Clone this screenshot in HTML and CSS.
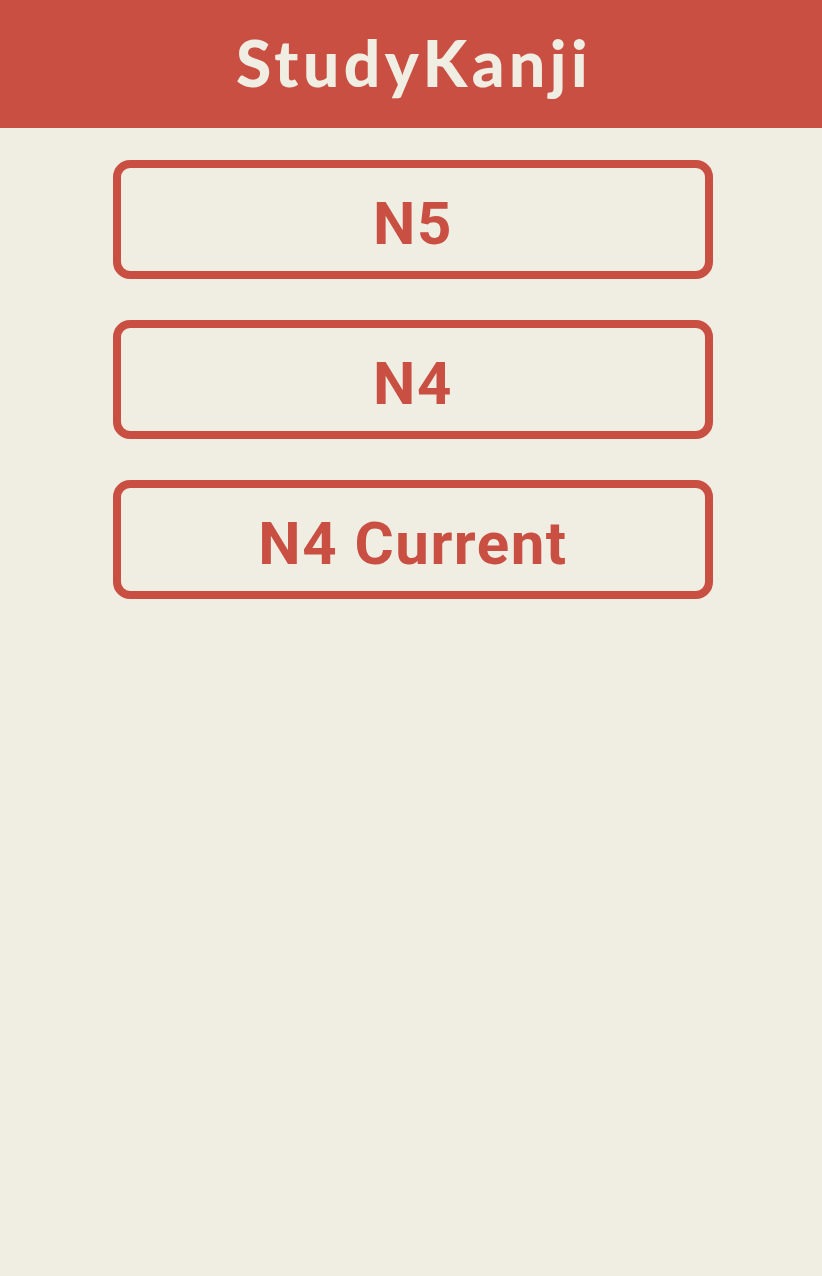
FILE: index.html
```html
<!DOCTYPE html>
<html>
<head>
<meta charset="utf-8">
<link rel="stylesheet" href="styles.css">
</head>
<body>
<header class="topbar"><h1 class="title">StudyKanji</h1></header>
<main class="menu">
  <a class="level" href="#">N5</a>
  <a class="level" href="#">N4</a>
  <a class="level" href="#">N4 Current</a>
</main>
</body>
</html>
```
FILE: styles.css
```css
html, body { margin: 0; padding: 0; }
body { background: #f0ede3; min-height: 1276px; }
.topbar {
  background: #c94f43;
  height: 128px;
  display: flex;
  align-items: center;
  justify-content: center;
}
.title {
  margin: 0;
  color: #f0ede3;
  font-family: "Lato", "DejaVu Sans", sans-serif;
  font-weight: 900;
  font-size: 64px;
  letter-spacing: 4.5px;
  line-height: 1;
  padding-bottom: 2px;
  padding-left: 6px;
}
.menu {
  display: flex;
  flex-direction: column;
  align-items: center;
  gap: 41px;
  padding-top: 32px;
  padding-left: 4px;
}
.level {
  box-sizing: border-box;
  width: 600px;
  height: 119px;
  border: 8px solid #c94f43;
  border-radius: 17px;
  display: flex;
  align-items: center;
  justify-content: center;
  color: #c94f43;
  text-decoration: none;
  font-family: "Roboto", sans-serif;
  font-weight: bold;
  font-size: 60px;
  letter-spacing: 1.5px;
  padding-top: 8px;
}
```
